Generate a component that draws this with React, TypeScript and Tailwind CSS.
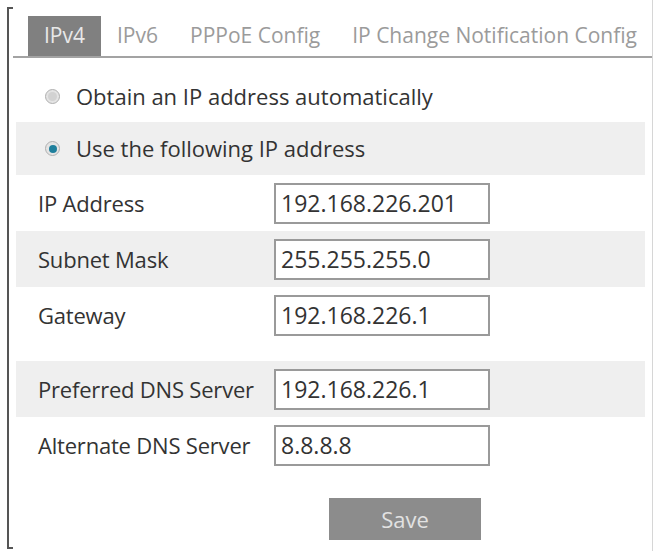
import React from "react";

const tabs = ["IPv4", "IPv6", "PPPoE Config", "IP Change Notification Config"];

interface FieldRowProps {
    label: string;
    value: string;
    shaded?: boolean;
}

function FieldRow({ label, value, shaded }: FieldRowProps) {
    return (
        <div className={`flex items-center h-[56px] pl-[22px] ${shaded ? "bg-[#efefef]" : ""}`}>
            <span className="w-[236px] shrink-0 text-[#333] tracking-[-0.2px]">{label}</span>
            <div className="w-[216px] h-[41px] flex items-center pl-[5px] border-2 border-[#9a9a9a] bg-white text-[#333] text-[23px]">
                {value}
            </div>
        </div>
    );
}

function Radio({ checked }: { checked?: boolean }) {
    return (
        <span className="w-[15px] h-[15px] rounded-full border border-[#b0b0b0] bg-[#e4e4e4] flex items-center justify-center shrink-0">
            {checked ? <span className="w-[8px] h-[8px] rounded-full bg-[#1f7f9c]" /> : <span className="w-[9px] h-[9px] rounded-full bg-[#d2d2d2]" />}
        </span>
    );
}

export default function App() {
    return (
        <div className="w-[656px] h-[551px] bg-white flex pl-[7px] text-[22px]" style={{ fontFamily: '"Open Sans", "Noto Sans", sans-serif' }}>
            {/* left bracket */}
            <div className="w-[6px] h-[542px] mt-[7px] border-l-2 border-y-2 border-[#555] shrink-0" />

            <div className="w-[640px] h-full border-r border-[#d6d6d6] flex flex-col">
                {/* Tabs */}
                <div className="mt-[16px] h-[42px] flex items-stretch border-b-2 border-[#a3a3a3] pl-[15px] text-[21px]">
                    {tabs.map((t, i) => (
                        <div
                            key={t}
                            className={`flex items-center shrink-0 whitespace-nowrap ${i === 3 ? "pl-[16px]" : "px-[16px]"} ${i === 0 ? "bg-[#808080] text-[#e8e8e8]" : "text-[#9b9b9b]"}`}
                        >
                            {t}
                        </div>
                    ))}
                </div>

                {/* Form */}
                <div className="mt-[12px] ml-[3px] mr-[7px] flex flex-col">
                    <div className="flex items-center gap-[16px] h-[52px] pl-[29px] text-[#333]">
                        <Radio />
                        <span>Obtain an IP address automatically</span>
                    </div>
                    <div className="flex items-center gap-[16px] h-[53px] pl-[29px] bg-[#efefef] text-[#333]">
                        <Radio checked />
                        <span>Use the following IP address</span>
                    </div>
                    <FieldRow label="IP Address" value="192.168.226.201" />
                    <FieldRow label="Subnet Mask" value="255.255.255.0" shaded />
                    <FieldRow label="Gateway" value="192.168.226.1" />
                    <div className="h-[18px]" />
                    <FieldRow label="Preferred DNS Server" value="192.168.226.1" shaded />
                    <FieldRow label="Alternate DNS Server" value="8.8.8.8" />

                    <button className="mt-[25px] ml-[313px] w-[152px] h-[42px] bg-[#8c8c8c] text-[#e2e2e2]">
                        Save
                    </button>
                </div>
            </div>
        </div>
    );
}
